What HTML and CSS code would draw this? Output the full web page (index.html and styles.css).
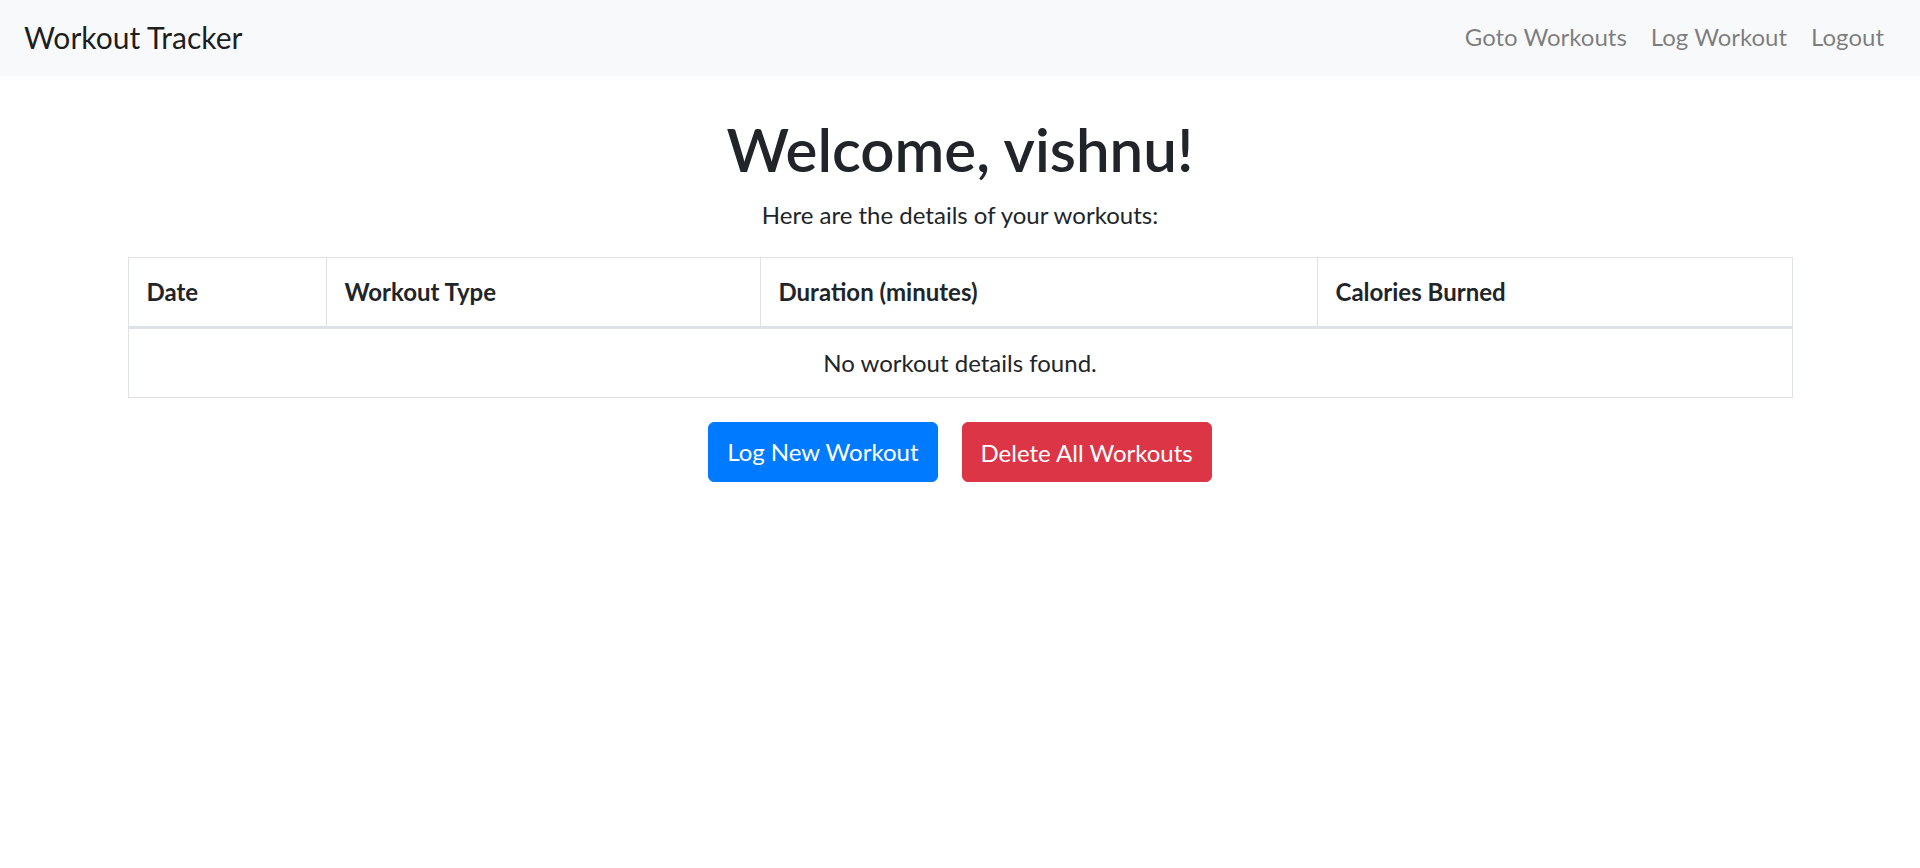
FILE: index.html
```html
<!DOCTYPE html>
<html lang="en">
<head>
<meta charset="utf-8">
<title>Workout Tracker</title>
<link rel="stylesheet" href="styles.css">
</head>
<body>
<nav class="navbar">
  <a class="brand" href="#">Workout Tracker</a>
  <ul class="nav-links">
    <li><a class="nav-link" href="#">Goto Workouts</a></li>
    <li><a class="nav-link" href="#">Log Workout</a></li>
    <li><a class="nav-link" href="#">Logout</a></li>
  </ul>
</nav>
<main class="container">
  <h1 class="title">Welcome, vishnu!</h1>
  <p class="subtitle">Here are the details of your workouts:</p>
  <table class="table">
    <colgroup>
      <col class="col-date">
      <col class="col-type">
      <col class="col-duration">
      <col class="col-calories">
    </colgroup>
    <thead>
      <tr>
        <th>Date</th>
        <th>Workout Type</th>
        <th>Duration (minutes)</th>
        <th>Calories Burned</th>
      </tr>
    </thead>
    <tbody>
      <tr>
        <td colspan="4" class="empty">No workout details found.</td>
      </tr>
    </tbody>
  </table>
  <div class="actions">
    <a class="btn btn-primary" href="#">Log New Workout</a>
    <button class="btn btn-danger" type="button">Delete All Workouts</button>
  </div>
</main>
</body>
</html>
```
FILE: styles.css
```css
html, body {
  margin: 0;
  padding: 0;
  background: #fff;
}

body {
  font-family: Lato, "Liberation Sans", sans-serif;
  font-size: 24px;
  line-height: 1.5;
  color: #212529;
}

.navbar {
  height: 76px;
  box-sizing: border-box;
  padding: 0 24px;
  background: #f8f9fa;
  display: flex;
  align-items: center;
  justify-content: space-between;
}

.brand {
  font-size: 30px;
  line-height: 45px;
  color: rgba(0, 0, 0, 0.9);
  text-decoration: none;
  margin-top: -2px;
}

.nav-links {
  display: flex;
  list-style: none;
  margin: -2px 0 0;
  padding: 0;
}

.nav-link {
  display: block;
  padding: 0 12px;
  color: rgba(0, 0, 0, 0.5);
  text-decoration: none;
  line-height: 36px;
}

.container {
  max-width: 1710px;
  margin: 0 auto;
  padding: 0 22.5px;
  box-sizing: border-box;
}

.title {
  margin: 37px 0 12px;
  font-size: 60px;
  font-weight: 600;
  line-height: 1.2;
  text-align: center;
}

.subtitle {
  margin: 0 0 24px;
  text-align: center;
}

.table {
  width: 100%;
  table-layout: fixed;
  border-collapse: collapse;
  margin-bottom: 24px;
  border: 1px solid #dee2e6;
}

.col-date { width: 198px; }
.col-type { width: 434px; }
.col-duration { width: 557px; }

.table th,
.table td {
  padding: 18px;
  line-height: 32px;
  border: 1px solid #dee2e6;
  vertical-align: top;
}

.table th {
  text-align: left;
  font-weight: 700;
  vertical-align: bottom;
  border-bottom: 3px solid #dee2e6;
}

.table .empty {
  text-align: center;
}

.actions {
  display: flex;
  justify-content: center;
  gap: 24px;
}

.btn {
  display: inline-block;
  box-sizing: border-box;
  height: 60px;
  padding: 0 18px;
  font-family: inherit;
  font-size: 24px;
  line-height: 57px;
  color: #fff;
  text-decoration: none;
  border: 1.5px solid transparent;
  border-radius: 6px;
  cursor: pointer;
}

.btn-primary {
  background: #007bff;
  border-color: #007bff;
}

.btn-danger {
  background: #dc3545;
  border-color: #dc3545;
  line-height: 60px;
}
```
